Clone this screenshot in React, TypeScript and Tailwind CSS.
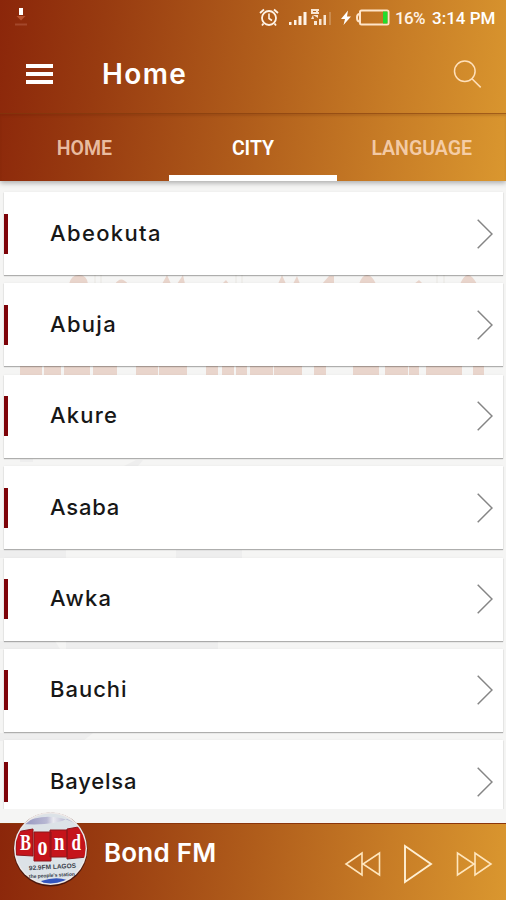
import React from 'react';
import { clsx } from 'clsx';

const CITIES = [
    { name: 'Abeokuta', tracking: 'tracking-[1.35px]' },
    { name: 'Abuja', tracking: 'tracking-[1.3px]' },
    { name: 'Akure', tracking: 'tracking-[1.2px]' },
    { name: 'Asaba', tracking: 'tracking-[0.8px]' },
    { name: 'Awka', tracking: 'tracking-[1.3px]' },
    { name: 'Bauchi', tracking: 'tracking-[1px]' },
    { name: 'Bayelsa', tracking: 'tracking-[0.8px]' },
];

const TABS = ['HOME', 'CITY', 'LANGUAGE'];

const StatusBar: React.FC = () => (
    <div className="flex h-9 items-center justify-between pl-[14px] pr-[11px] text-[#fff3e6]">
        <svg width="14" height="20" viewBox="0 0 14 20">
            <path d="M2.500 8h9L7 12.500z" fill="#b8532f" />
            <path d="M5 0h4v7H5z" fill="#fff" />
            <path d="M1 16.500h12" stroke="#a3472b" strokeWidth="2" />
        </svg>
        <div className="flex items-center">
            <svg width="20" height="20" viewBox="0 0 20 20" fill="none" stroke="currentColor" strokeWidth="1.800">
                <circle cx="10" cy="10" r="7" />
                <path d="M10 5.500v5l3 2" strokeWidth="1.600" />
                <path d="M1 5l4-3.500M19 5l-4-3.500M4.500 15.500L3 17.500M15.500 15.500L17 17.500" strokeWidth="1.800" />
            </svg>
            <svg className="ml-[9px]" width="45" height="20" viewBox="0 0 45 20" fill="currentColor">
                <path d="M1 14h2.500v3H1zM6 12h2.500v5H6zM10.500 8h3v9h-3zM15.500 4h3v13h-3z" />
                <path d="M23 1h8v2h-8zM23 4h8v2h-8zM23 1h2v5h-2zM28 1h2v5h-2zM25 7l5 3V7zM25 7l-2 4h3zM26 13h3v4h-3zM31 11h2.500v6H31zM35.500 7h2.500v10h-2.500z" opacity=".9" />
                <path d="M41 4h2v13h-2z" opacity=".23" />
            </svg>
            <svg className="ml-[7px]" width="12" height="18" viewBox="0 0 12 18" fill="#fff">
                <path d="M8 1.500L1 10h4L3.500 16 11 7.500H7z" />
            </svg>
            <svg className="ml-[4px]" width="34" height="18" viewBox="0 0 34 18">
                <rect x="4" y="1.500" width="28.500" height="14" rx="1.500" fill="none" stroke="#ffe5ca" strokeWidth="2" />
                <path d="M3.500 5C1 5 1 7 1 8.500s0 4 2.500 4" fill="none" stroke="#ffe5ca" strokeWidth="2" />
                <rect x="27" y="2.500" width="4.500" height="12" fill="#22dc2c" />
            </svg>
            <span className="ml-[5px] w-[37px] whitespace-nowrap text-[17px] font-medium leading-none tracking-[-0.6px]">16%</span>
            <span className="w-[63px] whitespace-nowrap text-[17px] font-medium leading-none text-white">3:14 PM</span>
        </div>
    </div>
);

const Header: React.FC = () => (
    <header className="relative z-10 h-[181px] shrink-0 bg-[linear-gradient(98deg,#8b260a_0%,#983b10_20%,#b05d1b_50%,#c77c26_76%,#da972f_100%)] font-[Roboto,sans-serif] shadow-[0_2px_5px_rgba(0,0,0,0.3)]">
        <StatusBar />
        <div className="flex h-[77px] items-center pl-[26px] pr-[24px]">
            <div className="mb-[2px] flex flex-col gap-1">
                <div className="h-1 w-[27px] bg-white" />
                <div className="h-1 w-[27px] bg-white" />
                <div className="h-1 w-[27px] bg-white" />
            </div>
            <h1 className="ml-[49px] grow pb-[2px] font-[Inter,sans-serif] text-[28px] font-semibold leading-none tracking-[1.400px] text-white">Home</h1>
            <svg width="29" height="30" viewBox="0 0 29 30" fill="none" stroke="#ffe0ba" strokeWidth="1.500">
                <circle cx="11.800" cy="11.300" r="10.300" />
                <path d="M19 18.700l8.700 8.700" />
            </svg>
        </div>
        <nav className="grid h-[68px] grid-cols-3 border-t border-[#7d380b]/60 shadow-[inset_0_2px_2px_rgba(80,30,0,0.15)]">
            {TABS.map(tab => (
                <div
                    key={tab}
                    className={clsx(
                        'flex items-center justify-center border-b-[6px] pt-[8px] text-[19.500px] font-semibold leading-none',
                        tab === 'CITY' ? 'border-white text-white' : 'border-transparent text-[#ffdfc8]/80'
                    )}
                >
                    {tab}
                </div>
            ))}
        </nav>
    </header>
);

// Faded city skyline, visible only between the cards
const Skyline: React.FC = () => (
    <svg className="absolute inset-0" width="506" height="642" viewBox="0 181 506 642">
        <g fill="#e9d5cc">
            <path d="M69 284q2-9 10-9t9 9zM115 284q6-9 13 0zM162 284l5-9 4 9zM177 284l6-9 2 9zM222 284l4-4 3 4zM278 284l4-9 4 9zM293 284l4-8 3 8zM322 284l7-8h5v8zM359 284q3-9 8-9t9 9zM414 284l5-4 4 4zM460 284q4-9 8-9t9 9z" />
            <path d="M20 366h22v9H20zM44 366h17v9H44zM64 366h26v9H64zM93 366h24v9H93zM136 366h22v9h-22zM159 366h28v9h-28zM206 366h12v9h-12zM222 366h12v9h-12zM236 366h11v9h-11zM250 366h23v9h-23zM274 366h28v9h-28zM314 366h12v9h-12zM353 366h26v9h-26zM385 366h23v9h-23zM409 366h10v9h-10zM426 366h36v9h-36zM473 366h11v9h-11z" />
        </g>
        <path d="M95 275v9M101 275v9M236 275v9M242 275v9M437 275v9M444 275v9" stroke="#e9e7e2" />
        <g fill="#eeeeee">
            <path d="M20 459h13v3H20zM124 466l12-6h7l-5 6zM0 550h66v8H0zM176 550h66v8h-66zM0 641h55l5 8H0zM66 641h152v8H66zM0 733h93l-10 8H0z" />
        </g>
    </svg>
);

const CityCard: React.FC<{ name: string; tracking: string }> = ({ name, tracking }) => (
    <div className="mb-[8.400px] flex h-[83px] items-center bg-white pr-[10px] shadow-[0_1px_1px_rgba(0,0,0,0.28),0_0_2px_rgba(0,0,0,0.06)]">
        <div className="h-10 w-1 bg-[#7d0308]" />
        <span className={clsx('ml-[42px] grow pb-[2px] text-[22px] font-medium leading-none text-[#171717]', tracking)}>{name}</span>
        <svg width="16" height="30" viewBox="0 0 16 30" fill="none" stroke="#858585" strokeWidth="1.500">
            <path d="M.7.700L15 15 .7 29.300" />
        </svg>
    </div>
);

const StationLogo: React.FC = () => (
    <svg className="absolute left-[13px] top-[-14px]" width="76" height="78" viewBox="0 0 76 78">
        <defs>
            <clipPath id="disc"><circle cx="37.500" cy="38.500" r="35" /></clipPath>
            <linearGradient id="sky" x1="0" y1="0" x2="1" y2="0">
                <stop offset="0" stopColor="#9292bd" />
                <stop offset=".48" stopColor="#b8b8d3" />
                <stop offset=".6" stopColor="#e9e9ef" />
                <stop offset="1" stopColor="#9494bd" />
            </linearGradient>
        </defs>
        <circle cx="37.500" cy="39.500" r="37" fill="#4b170c" />
        <circle cx="37.500" cy="38.500" r="36.500" fill="#eee9e8" />
        <g clipPath="url(#disc)">
            <path d="M0 0h76v78H0z" fill="#dce2e7" />
            <path d="M8 14Q34 0 62 13L54 9Q40 16 8 14z" fill="url(#sky)" />
            <g fill="#c5141b" stroke="#8c161b">
                <path d="M3 22l17-3v27l-17-1zM37 20h17v27H37zM54 19l17-3 3 31-20 2zM21 22h17v29H21z" />
            </g>
            <path d="M28 71q15-5 26-1l-5 6H34z" fill="#3455bd" />
        </g>
        <g fill="#fff" fontFamily="Liberation Serif, serif" fontWeight="700">
            <text x="7" y="40" fontSize="24" textLength="11" lengthAdjust="spacingAndGlyphs">B</text>
            <text x="24.500" y="45" fontSize="27" textLength="10" lengthAdjust="spacingAndGlyphs">o</text>
            <text x="41" y="40" fontSize="26" textLength="10.500" lengthAdjust="spacingAndGlyphs">n</text>
            <text x="58.500" y="40" fontSize="23" textLength="9.500" lengthAdjust="spacingAndGlyphs">d</text>
        </g>
        <g fill="#39414b" fontFamily="Liberation Sans, sans-serif" fontWeight="700">
            <text x="16" y="59" fontSize="6.500" textLength="47" transform="rotate(-3 39 58)">92.9FM LAGOS</text>
            <text x="16" y="67" fontSize="5" textLength="46" transform="rotate(-3 38 67)">the people's station</text>
        </g>
    </svg>
);

const Player: React.FC = () => (
    <footer className="relative flex h-[77px] shrink-0 border-t border-[#8b350b] bg-[linear-gradient(98deg,#8b260a_0%,#983b10_20%,#b05d1b_50%,#c77c26_76%,#da972f_100%)] pl-[104px] pr-[13px]">
        <StationLogo />
        <span className="mt-[14px] grow text-[26px] font-semibold leading-[30px] tracking-[0.2px] text-white">Bond FM</span>
        <div className="mt-[20px] flex h-10 items-center text-[#ffe6bd]">
            <svg width="37" height="26" viewBox="0 0 37 26" fill="none" stroke="currentColor" strokeWidth="1.600">
                <path d="M18 2v22L2 13zM35.500 2v22L19 13z" />
            </svg>
            <svg className="ml-[22px]" width="30" height="40" viewBox="0 0 30 40" fill="none" stroke="#fff0d4" strokeWidth="1.900">
                <path d="M2 2v36l26-18z" />
            </svg>
            <svg className="ml-[23px]" width="37" height="26" viewBox="0 0 37 26" fill="none" stroke="currentColor" strokeWidth="1.600">
                <path d="M1.500 2v22L18 13zM19 2v22l16-11z" />
            </svg>
        </div>
    </footer>
);

export default function App() {
    return (
        <div className="flex h-[900px] w-[506px] flex-col overflow-hidden bg-[#f5f5f4] font-[Inter,sans-serif]">
            <Header />
            <main className="relative h-[642px] shrink-0 pb-[14px]">
                <Skyline />
                <div className="relative h-[628px] overflow-hidden pl-[4px] pr-[3px] pt-[11px]">
                    {CITIES.map(city => <CityCard key={city.name} {...city} />)}
                </div>
            </main>
            <Player />
        </div>
    );
}
